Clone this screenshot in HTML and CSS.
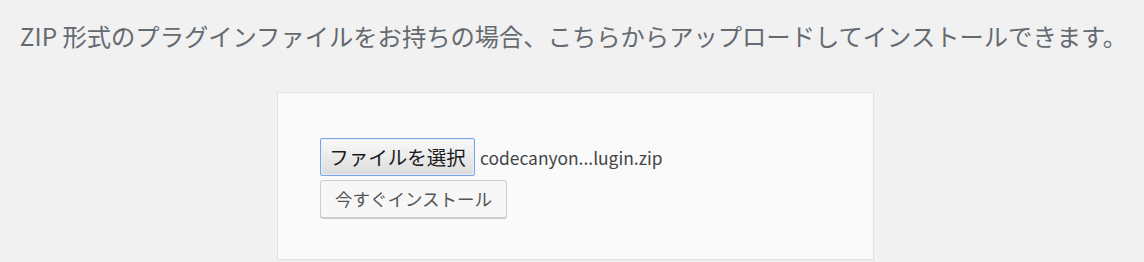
FILE: index.html
```html
<!DOCTYPE html>
<html lang="ja">
<head>
<meta charset="utf-8">
<link rel="stylesheet" href="styles.css">
</head>
<body>
<p class="install-help">ZIP 形式のプラグインファイルをお持ちの場合、こちらからアップロードしてインストールできます。</p>
<form class="upload-form">
  <div class="file-row">
    <button type="button" class="file-btn">ファイルを選択</button>
    <span class="file-name">codecanyon...lugin.zip</span>
  </div>
  <button type="button" class="install-btn">今すぐインストール</button>
</form>
</body>
</html>
```
FILE: styles.css
```css
html, body {
  margin: 0;
  padding: 0;
}
body {
  background: #f1f1f1;
  font-family: "Noto Sans CJK JP", "Noto Sans", sans-serif;
  width: 1144px;
  height: 262px;
  overflow: hidden;
}
.install-help {
  margin: 0;
  padding: 18px 0 0;
  height: 72px;
  box-sizing: border-box;
  font-size: 24.3px;
  line-height: 36px;
  color: #656a70;
  text-align: center;
  padding-left: 3px;
}
.upload-form {
  margin: 20px 0 0 277px;
  width: 597px;
  box-sizing: border-box;
  background: #fafafa;
  border: 1px solid #e3e3e3;
  box-shadow: 1px 1px 0 #ececec, 3px 0 0 #f4f4f4;
  padding: 45px 42px 41px;
  display: flex;
  flex-direction: column;
  align-items: flex-start;
  gap: 4px;
}
.file-row {
  display: flex;
  align-items: center;
  gap: 5px;
}
.file-btn {
  font-family: "Noto Sans CJK JP", sans-serif;
  font-size: 19.5px;
  line-height: 1;
  height: 38px;
  width: 155px;
  padding: 0 8px;
  color: #1a1a1a;
  background: linear-gradient(#f9f9f9, #dcdcdc);
  border: 1px solid #78a3e6;
  border-radius: 2px;
  box-shadow: inset 0 0 0 1px #e8effa;
  white-space: nowrap;
}
.file-name {
  font-size: 17.4px;
  color: #444;
}
.install-btn {
  font-family: "Noto Sans CJK JP", sans-serif;
  font-size: 17.5px;
  line-height: 1;
  height: 38px;
  width: 187px;
  padding: 0 12px;
  color: #555;
  background: #f7f7f7;
  border: 1px solid #cccccc;
  border-radius: 3px;
  box-shadow: 0 1px 0 #cccccc;
  white-space: nowrap;
}
```
